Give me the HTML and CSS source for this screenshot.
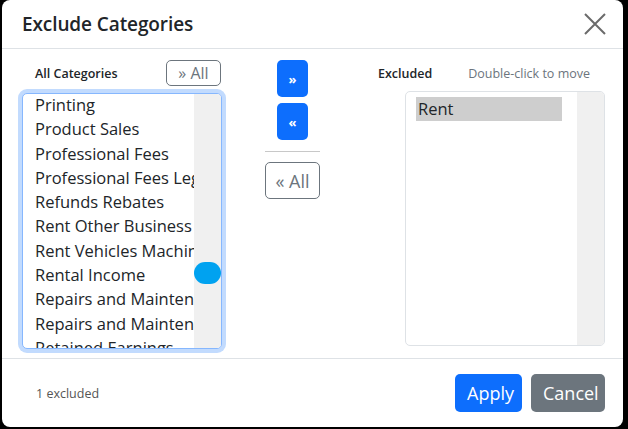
FILE: index.html
```html
<!DOCTYPE html>
<html>
<head>
<meta charset="utf-8">
<link rel="stylesheet" href="styles.css">
</head>
<body>
<div class="modal">
  <div class="modal-header">
    <h5 class="modal-title">Exclude Categories</h5>
    <button class="btn-close" aria-label="Close">
      <svg width="22" height="22" viewBox="0 0 22 22"><path d="M1 1L21 21M21 1L1 21" stroke="#6b6b6b" stroke-width="2" fill="none"/></svg>
    </button>
  </div>
  <div class="modal-body">
    <div class="col col-left">
      <div class="col-head">
        <span class="col-label">All Categories</span>
        <button class="btn-outline btn-sm">» All</button>
      </div>
      <div class="listbox focused">
        <div class="options shift">
          <div class="opt">Printing</div>
          <div class="opt">Product Sales</div>
          <div class="opt">Professional Fees</div>
          <div class="opt">Professional Fees Legal</div>
          <div class="opt">Refunds Rebates</div>
          <div class="opt">Rent Other Business</div>
          <div class="opt">Rent Vehicles Machinery</div>
          <div class="opt">Rental Income</div>
          <div class="opt">Repairs and Maintenance</div>
          <div class="opt">Repairs and Maintenance Other</div>
          <div class="opt">Retained Earnings</div>
        </div>
        <div class="track"><span class="thumb"></span></div>
      </div>
    </div>
    <div class="col col-mid">
      <button class="btn-primary btn-arrow">»</button>
      <button class="btn-primary btn-arrow">«</button>
      <hr class="sep">
      <button class="btn-outline btn-all">« All</button>
    </div>
    <div class="col col-right">
      <div class="col-head right-head">
        <span class="col-label">Excluded</span>
        <span class="hint">Double-click to move</span>
      </div>
      <div class="listbox plain">
        <div class="options padded">
          <div class="opt selected">Rent</div>
        </div>
        <div class="track"></div>
      </div>
    </div>
  </div>
  <div class="modal-footer">
    <span class="count">1 excluded</span>
    <div class="actions">
      <button class="btn-primary btn-lg">Apply</button>
      <button class="btn-secondary btn-lg">Cancel</button>
    </div>
  </div>
</div>
</body>
</html>
```
FILE: styles.css
```css
* { box-sizing: border-box; }
html, body { margin: 0; padding: 0; background: #000; }
body {
  font-family: "Segoe UI", "Open Sans", "Noto Sans", sans-serif;
  color: #212529;
  width: 628px;
  height: 429px;
  overflow: hidden;
}
button { font-family: inherit; cursor: pointer; }
.modal {
  margin-left: 2px;
  width: 621px;
  height: 427px;
  background: #fff;
  border-radius: 8px;
  display: flex;
  flex-direction: column;
}
.modal-header {
  height: 49px;
  border-bottom: 1px solid #dee2e6;
  display: flex;
  align-items: center;
  justify-content: space-between;
  padding: 0 17px 0 20px;
}
.modal-title {
  margin: 0;
  font-size: 19px;
  font-weight: 600;
  letter-spacing: -0.1px;
}
.btn-close {
  border: 0;
  background: transparent;
  padding: 0;
  width: 22px;
  height: 22px;
  display: flex;
}
.modal-body {
  height: 309px;
  display: flex;
  padding: 11px 18px 0 20px;
}
.col { display: flex; flex-direction: column; }
.col-left { width: 200px; }
.col-head {
  height: 26px;
  display: flex;
  align-items: center;
  justify-content: space-between;
  padding-left: 13px;
  margin-bottom: 7px;
}
.col-left .col-head { padding-right: 1px; }
.col-label { font-size: 12.5px; font-weight: 600; }
.hint { font-size: 12.5px; color: #6c757d; }
.btn-outline {
  background: #fff;
  border: 1px solid #6c757d;
  color: #6c757d;
  border-radius: 5px;
  padding: 0;
}
.btn-sm { width: 55px; height: 26px; font-size: 16px; }
.listbox {
  display: flex;
  overflow: hidden;
  background: #fff;
}
.listbox.focused {
  width: 200px;
  height: 256px;
  border: 1px solid #86b7fe;
  border-radius: 5px;
  box-shadow: 0 0 0 4px #c2dbfe;
}
.listbox.plain {
  width: 200px;
  height: 255px;
  border: 1px solid #dee2e6;
  border-radius: 5px;
  align-self: flex-end;
  margin-top: -2px;
}
.options {
  flex: 1;
  overflow: hidden;
  min-width: 0;
}
.options.shift { padding-left: 12px; margin-top: -1px; }
.options.padded { padding: 5px 15px 0 10px; }
.opt {
  font-size: 16.5px;
  line-height: 24.3px;
  white-space: nowrap;
}
.opt.selected { background: #cecece; padding-left: 2px; height: 24px; line-height: 24px; }
.track {
  width: 27px;
  flex: none;
  background: #f0f0f0;
  position: relative;
}
.thumb {
  position: absolute;
  left: 0;
  top: 168px;
  width: 27px;
  height: 22px;
  border-radius: 11px;
  background: #00a2f0;
}
.col-mid {
  width: 55px;
  margin-left: 43px;
  align-items: center;
}
.btn-primary {
  background: #0d6efd;
  color: #fff;
  border: 0;
  border-radius: 5px;
}
.btn-arrow {
  width: 31px;
  height: 37px;
  font-size: 13px;
  font-weight: 700;
  padding: 0;
  margin-bottom: 6px;
}
.sep {
  width: 55px;
  border: 0;
  border-top: 1px solid #c8c8c8;
  margin: 5px 0 10px;
}
.btn-all { width: 55px; height: 37px; font-size: 18px; }
.col-right {
  flex: 1;
  margin-left: 58px;
}
.right-head { padding-left: 0; padding-right: 15px; }
.modal-footer {
  flex: 1;
  border-top: 1px solid #dee2e6;
  display: flex;
  align-items: center;
  justify-content: space-between;
  padding: 0 18px 0 34px;
}
.count { font-size: 12.5px; color: #555; }
.actions { display: flex; gap: 9px; }
.btn-lg {
  height: 38px;
  font-size: 18px;
  padding: 0 12px;
  border-radius: 5px;
}
.btn-lg.btn-primary { width: 67px; }
.btn-secondary {
  width: 74px;
  background: #6c757d;
  color: #fff;
  border: 0;
}
```
